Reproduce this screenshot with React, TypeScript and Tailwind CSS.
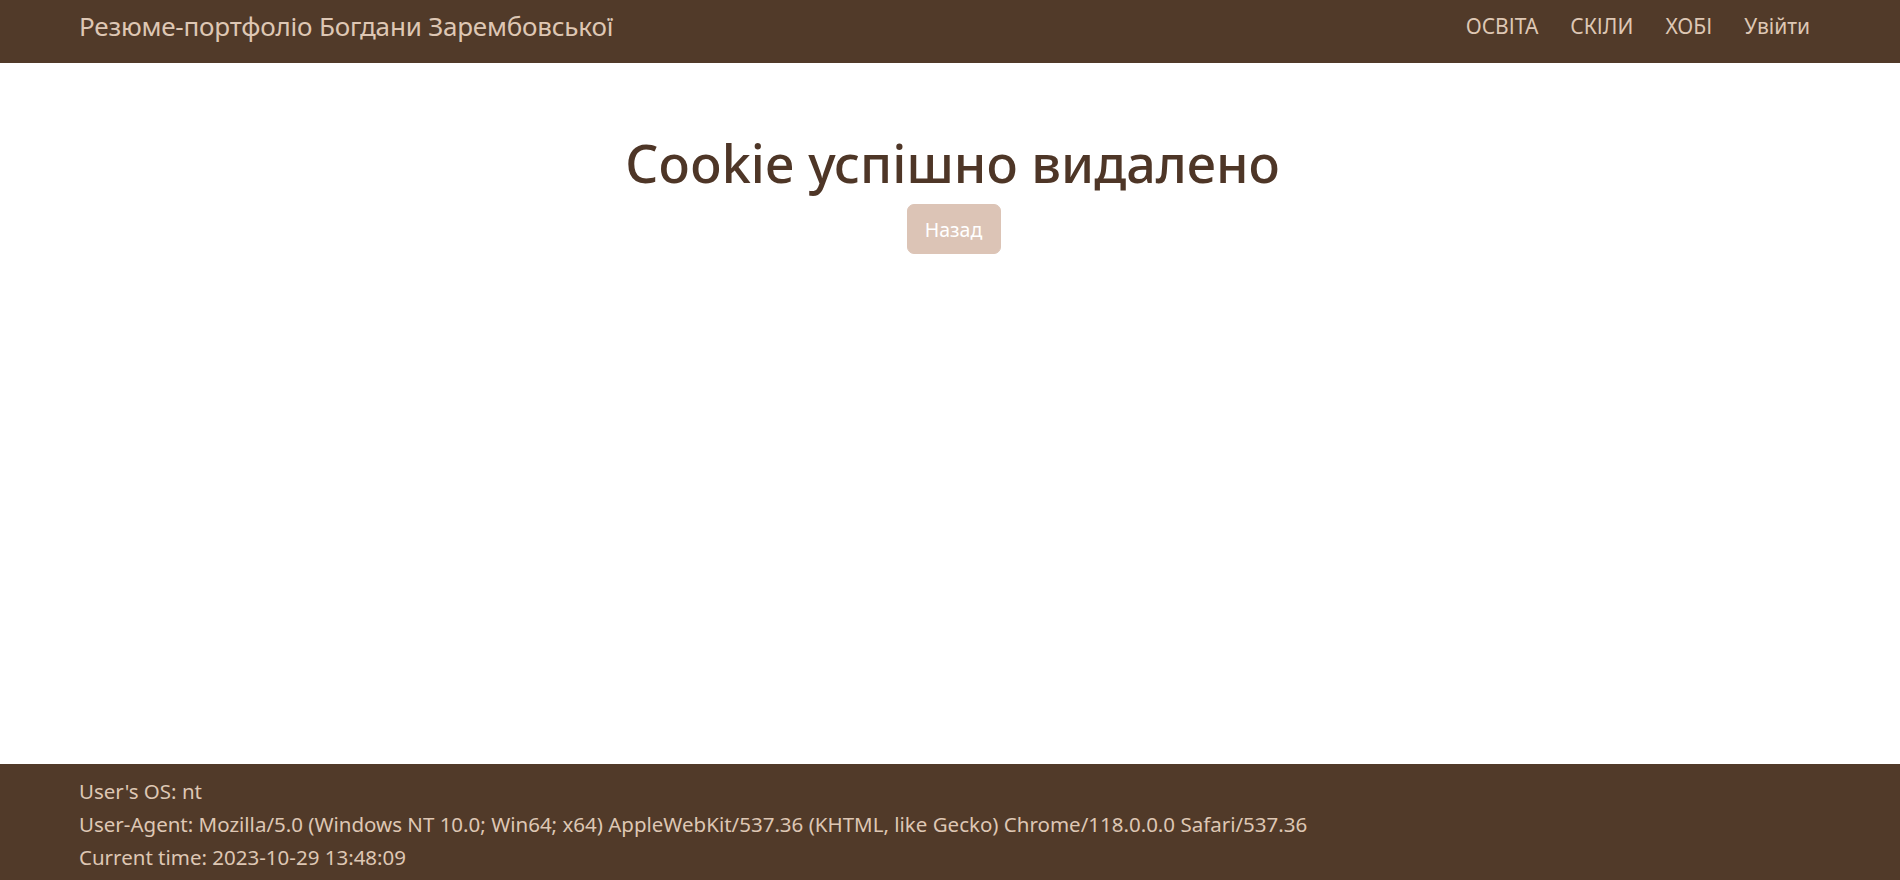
import React from "react";

const font = { fontFamily: '"Noto Sans", "Open Sans", sans-serif' };

export default function App() {
  return (
    <div className="min-h-[880px] flex flex-col bg-white" style={font}>
      <nav className="h-[63px] bg-[#513a29] flex items-center justify-between pl-[79px] pr-[80px]">
        <a className="text-[26px] text-[#dec7b4] pb-[10px] tracking-[-0.2px]">Резюме-портфоліо Богдани Зарембовської</a>
        <ul className="flex items-center pb-[10px]">
          <li><a className="block px-[10px] text-[21px] text-[#dec7b4]">ОСВІТА</a></li>
          <li><a className="block px-[10px] ml-[12px] text-[21px] text-[#dec7b4]">СКІЛИ</a></li>
          <li><a className="block px-[10px] ml-[12px] text-[21px] text-[#dec7b4]">ХОБІ</a></li>
          <li><a className="block px-[10px] ml-[12px] text-[21px] text-[#dec7b4]">Увійти</a></li>
        </ul>
      </nav>
      <main className="flex-1 flex flex-col items-center pl-[5px]">
        <h1 className="mt-[69px] text-[52px] leading-[1.2] font-medium text-[#4e3627]">Cookie успішно видалено</h1>
        <button className="mt-[10px] ml-[2px] h-[50px] w-[94px] rounded-[7px] bg-[#dcc4b6] text-white text-[19.5px] border border-[#dcc4b6]">Назад</button>
      </main>
      <footer className="bg-[#513a29] pl-[79px] pt-[11px] pb-[6px] text-[20.5px] leading-[33px] text-[#dec7b4]">
        <div>User's OS: nt</div>
        <div>User-Agent: Mozilla/5.0 (Windows NT 10.0; Win64; x64) AppleWebKit/537.36 (KHTML, like Gecko) Chrome/118.0.0.0 Safari/537.36</div>
        <div>Current time: 2023-10-29 13:48:09</div>
      </footer>
    </div>
  );
}
